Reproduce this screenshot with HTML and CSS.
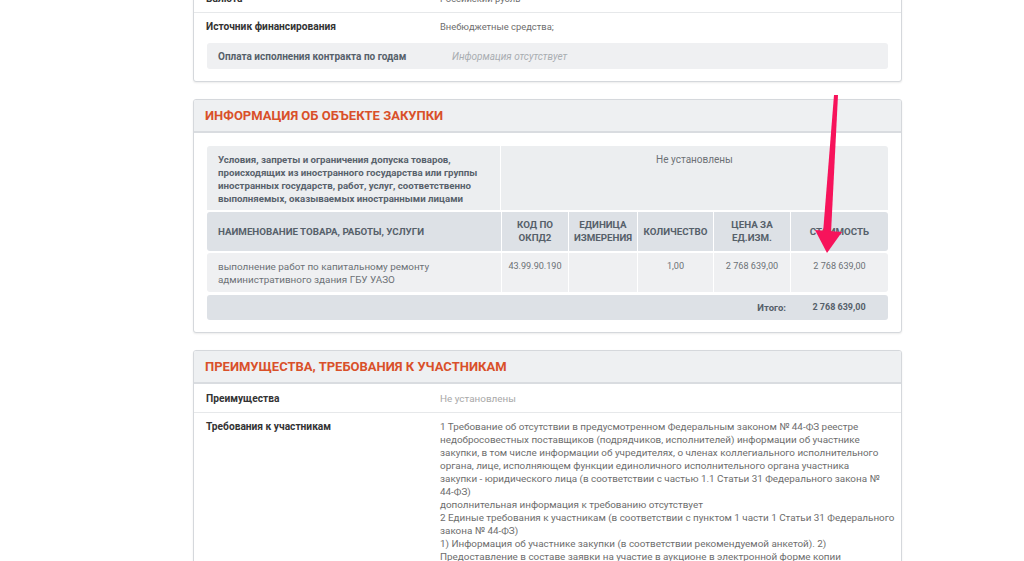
FILE: index.html
```html
<!DOCTYPE html>
<html lang="ru">
<head>
    <meta charset="UTF-8">
    <meta name="viewport" content="width=device-width, initial-scale=1.0">
    <title>Извещение о закупке</title>
    <link rel="stylesheet" href="styles.css">
</head>
<body>
    <div class="page">

        <!-- Финансирование -->
        <section class="card finance">
            <div class="row">
                <div class="label">Валюта</div>
                <div class="value">Российский рубль</div>
            </div>
            <div class="row plain">
                <div class="label">Источник финансирования</div>
                <div class="value">Внебюджетные средства;</div>
            </div>
            <div class="subbox">
                <div class="sublabel">Оплата исполнения контракта по годам</div>
                <div class="empty">Информация отсутствует</div>
            </div>
        </section>

        <!-- Объект закупки -->
        <section class="card">
            <div class="card-header">Информация об объекте закупки</div>
            <div class="card-body">
                <div class="cond">
                    <div class="cond-label">Условия, запреты и ограничения допуска товаров, происходящих из иностранного государства или группы иностранных государств, работ, услуг, соответственно выполняемых, оказываемых иностранными лицами</div>
                    <div class="cond-value">Не установлены</div>
                </div>
                <div class="grid-row head">
                    <div class="cell left">Наименование товара, работы, услуги</div>
                    <div class="cell">Код по ОКПД2</div>
                    <div class="cell">Единица измерения</div>
                    <div class="cell">Количество</div>
                    <div class="cell">Цена за ед.изм.</div>
                    <div class="cell">Стоимость</div>
                </div>
                <div class="grid-row item">
                    <div class="cell left">выполнение работ по капитальному ремонту административного здания ГБУ УАЗО</div>
                    <div class="cell num">43.99.90.190</div>
                    <div class="cell"></div>
                    <div class="cell num">1,00</div>
                    <div class="cell num">2 768 639,00</div>
                    <div class="cell num">2 768 639,00</div>
                </div>
                <div class="grid-row total">
                    <div class="cell total-label">Итого:</div>
                    <div class="cell total-sum">2 768 639,00</div>
                </div>
            </div>
        </section>

        <!-- Требования -->
        <section class="card">
            <div class="card-header">Преимущества, требования к участникам</div>
            <div class="row">
                <div class="label">Преимущества</div>
                <div class="value muted">Не установлены</div>
            </div>
            <div class="row">
                <div class="label">Требования к участникам</div>
                <div class="value">
                    1 Требование об отсутствии в предусмотренном Федеральным законом № 44-ФЗ реестре недобросовестных поставщиков (подрядчиков, исполнителей) информации об участнике закупки, в том числе информации об учредителях, о членах коллегиального исполнительного органа, лице, исполняющем функции единоличного исполнительного органа участника<br>
                    закупки - юридического лица (в соответствии с частью 1.1 Статьи 31 Федерального закона № <span class="nw">44-ФЗ)</span><br>
                    дополнительная информация к требованию отсутствует<br>
                    2 Единые требования к участникам (в соответствии с пунктом 1 части 1 Статьи 31 Федерального закона № <span class="nw">44-ФЗ)</span><br>
                    1) Информация об участнике закупки (в соответствии рекомендуемой анкетой). 2)<br>
                    Предоставление в составе заявки на участие в аукционе в электронной форме копии документов, подтверждающих соответствие участника закупки требованиям
                </div>
            </div>
        </section>

        <!-- пометка на скриншоте -->
        <svg class="pointer" width="60" height="170" viewBox="800 90 60 170">
            <polygon points="834,95 838,95 831,233 823,233" fill="#f7135b"/>
            <polygon points="815,230 842,232 827,253" fill="#f7135b"/>
        </svg>
    </div>
</body>
</html>
```

FILE: styles.css
```css
/* General */
body {
    margin: 0;
    background: #fff;
    font-family: Roboto, "Noto Sans", sans-serif;
    font-size: 10px;
    line-height: 13px;
    color: #333;
}

.page {
    position: relative;
    width: 709px;
    margin: -16px 0 0 193px;
    padding-bottom: 20px;
}

/* Cards */
.card {
    background: #fff;
    border: 1px solid #d5d8dc;
    border-radius: 3px;
    box-shadow: 0 1px 2px rgba(0, 0, 0, 0.08);
    margin-bottom: 17px;
    overflow: hidden;
}

.card-header {
    background: #eef0f2;
    border-bottom: 2px solid #d9dce0;
    padding: 9px 11px;
    color: #d9502a;
    font-size: 13px;
    font-weight: 700;
    text-transform: uppercase;
    line-height: 13px;
}

.card-body {
    padding: 13px 13px 12px;
}

/* Label / value rows */
.row {
    display: flex;
    padding: 7px 12px;
    border-bottom: 1px solid #e6e8ea;
}

.card-header + .row {
    padding-top: 8px;
}

.row.plain,
.row:last-child {
    border-bottom: none;
}

.label {
    flex: 0 0 234px;
    font-size: 10.2px;
    font-weight: 700;
    color: #333;
}

.value {
    flex: 0 0 458px;
    font-size: 9.9px;
    color: #6d6d6d;
}

.nw {
    white-space: nowrap;
}

.finance .value {
    font-size: 9.4px;
}

.value.muted {
    color: #a8a8a8;
}

.subbox {
    display: flex;
    margin: 3px 13px 12px;
    padding: 7px 11px 6px;
    background: #eff0f2;
    border-radius: 3px;
}

.sublabel {
    flex: 0 0 234px;
    font-weight: 700;
    color: #56606a;
}

.empty {
    font-size: 10px;
    font-style: italic;
    color: #a9adb1;
}

/* Conditions block */
.cond {
    display: grid;
    grid-template-columns: 294px 1fr;
    background: #eceef0;
    border-radius: 3px 3px 0 0;
}

.cond-label {
    padding: 7px 11px 5px;
    font-size: 9.7px;
    font-weight: 700;
    color: #58626c;
    border-right: 1px solid #fff;
}

.cond-value {
    padding: 7px 11px;
    text-align: center;
    color: #6c7176;
}

/* Items table */
.grid-row {
    display: grid;
    grid-template-columns: 294px 67px 69px 76px 77px 1fr;
    margin-top: 2px;
    border-radius: 3px;
}

.cell {
    padding: 6px 4px;
    text-align: center;
    border-left: 1px solid #fff;
}

.cell.left {
    text-align: left;
    padding-left: 11px;
    border-left: none;
}

.head {
    background: #dde1e6;
    font-size: 9.75px;
    font-weight: 700;
    text-transform: uppercase;
    color: #56606a;
}

.head .cell {
    display: flex;
    align-items: center;
    justify-content: center;
    padding: 6px 2px 7px;
}

.head .cell.left {
    justify-content: flex-start;
    padding-left: 11px;
}

.item {
    background: #eff0f2;
    color: #6c7176;
    font-size: 9.9px;
}

.item .cell {
    padding: 7px 4px 6px;
    min-height: 26px;
}

.item .cell.num {
    font-size: 9.1px;
}

.item .cell.left {
    padding-left: 11px;
}

.total {
    background: #dde1e6;
    margin-top: 3px;
    font-size: 9.5px;
    font-weight: 700;
    color: #56606a;
}

.total .cell {
    padding: 6px 4px;
    border-left: none;
}

.total-label {
    grid-column: 1 / 6;
    text-align: right;
}

.total-sum {
    grid-column: 6;
    font-size: 9px;
}

/* Annotation arrow */
.pointer {
    position: absolute;
    left: 607px;
    top: 106px;
}
```
